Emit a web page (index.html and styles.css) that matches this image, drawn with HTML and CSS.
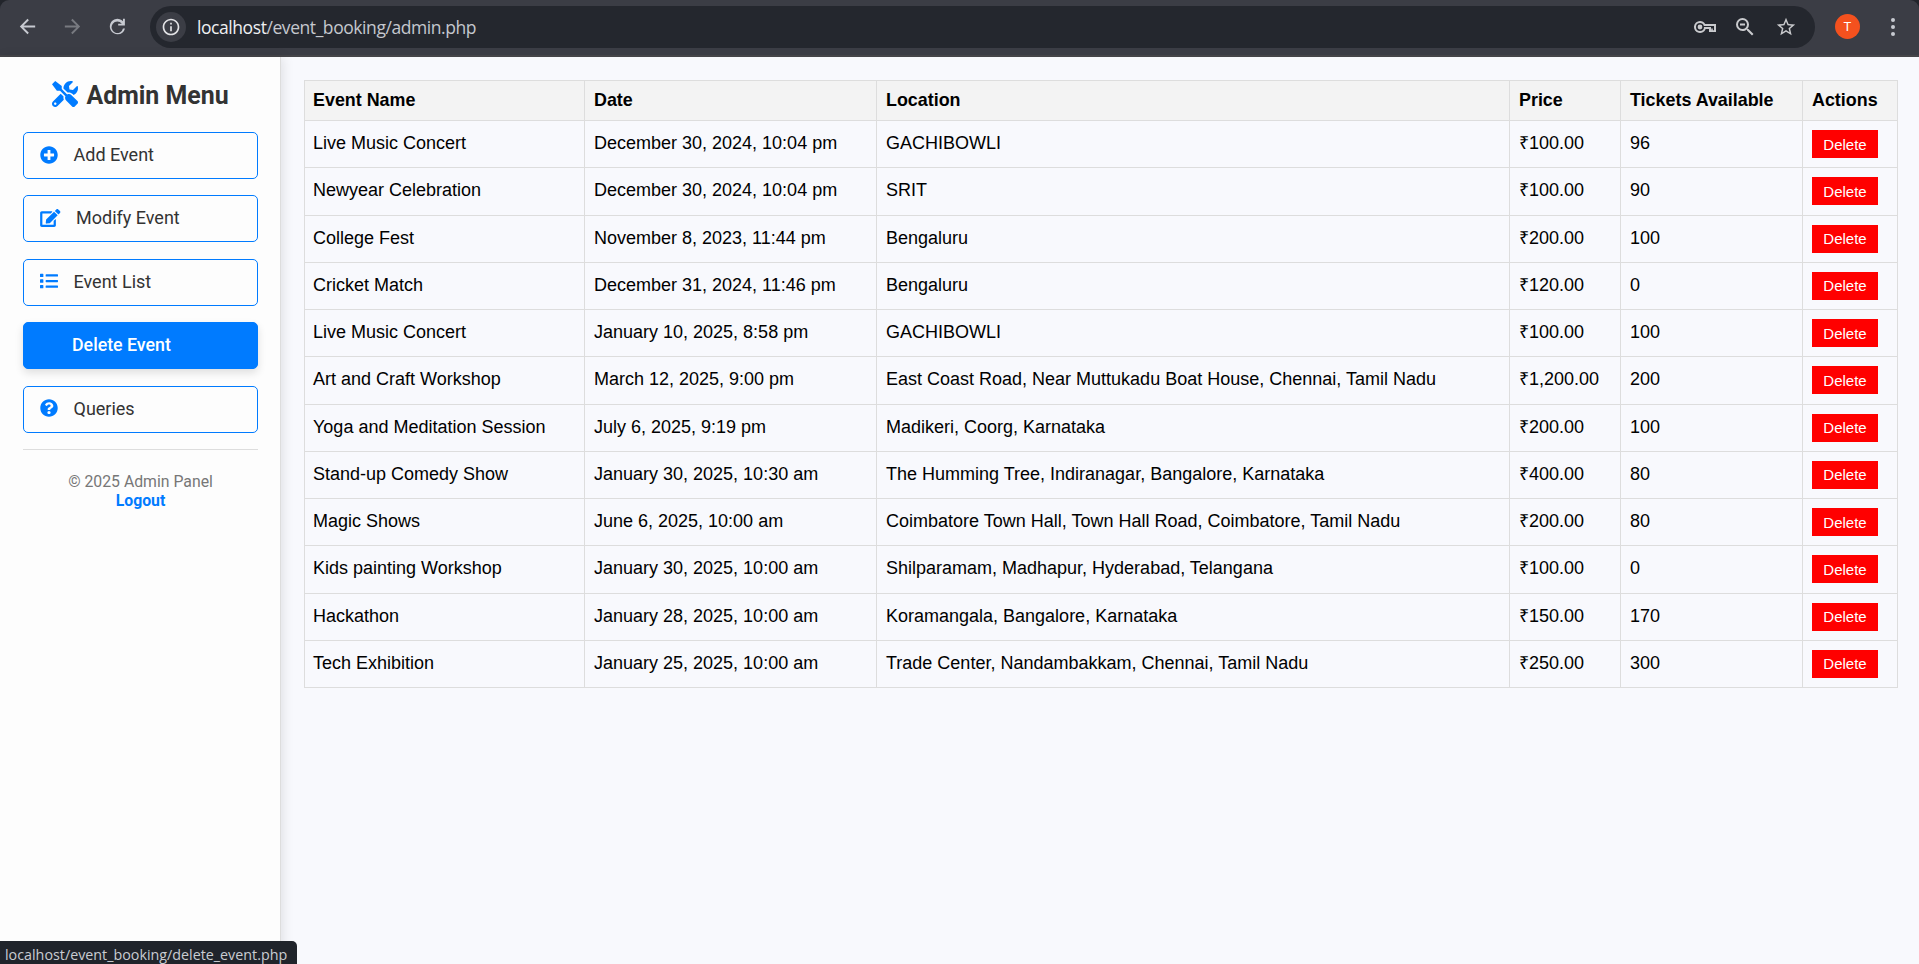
FILE: index.html
```html
<!DOCTYPE html>
<html lang="en">
<head>
<meta charset="utf-8">
<title>Admin Panel</title>
<link rel="stylesheet" href="styles.css">
</head>
<body>
<header class="toolbar">
  <svg class="nav-icon" viewBox="0 0 24 24"><path d="M20 11H7.83l5.59-5.59L12 4l-8 8 8 8 1.41-1.41L7.83 13H20z"/></svg>
  <svg class="nav-icon nav-icon-off" viewBox="0 0 24 24"><path d="M4 11h12.17l-5.59-5.59L12 4l8 8-8 8-1.41-1.41L16.17 13H4z"/></svg>
  <svg class="nav-icon" viewBox="0 0 24 24"><path d="M12 20a8 8 0 1 1 5.7-13.6V4h2v7h-7V9h3.8A6 6 0 1 0 17.7 14h2.1A8 8 0 0 1 12 20z"/></svg>
  <div class="omnibox">
    <span class="site-info"><svg viewBox="0 0 24 24"><path d="M11 17h2v-6h-2v6zm1-15C6.48 2 2 6.48 2 12s4.480 10 10 10 10-4.480 10-10S17.520 2 12 2zm0 18c-4.410 0-8-3.590-8-8s3.590-8 8-8 8 3.590 8 8-3.590 8-8 8zM11 9h2V7h-2v2z"/></svg></span>
    <span class="url"><span class="host">localhost</span>/event_booking/admin.php</span>
    <svg class="box-icon key" viewBox="0 0 24 14"><path fill-rule="evenodd" d="M7 1a6 6 0 1 0 5.650 8H16v3h7V4H12.200A6 6 0 0 0 7 1zm0 2a4 4 0 0 1 3.900 3H21v4.200h-1.200V8.500h-1.600v1.700H18V7H11A4 4 0 1 1 7 3zm0 1.600a2.400 2.400 0 1 0 0 4.800 2.400 2.400 0 0 0 0-4.800z"/></svg>
    <svg class="box-icon lens" viewBox="0 0 24 24"><path d="M15.500 14h-.79l-.28-.27A6.471 6.471 0 0 0 16 9.500 6.500 6.500 0 1 0 9.500 16c1.610 0 3.090-.59 4.230-1.570l.27.28v.79l5 4.990L20.490 19l-4.990-5zm-6 0C7.010 14 5 11.990 5 9.500S7.010 5 9.500 5 14 7.010 14 9.500 11.990 14 9.500 14zM7 8.500h5v2H7z"/></svg>
    <svg class="box-icon star" viewBox="0 0 24 24"><path d="M22 9.240l-7.190-.62L12 2 9.190 8.630 2 9.240l5.460 4.730L5.820 21 12 17.270 18.180 21l-1.630-7.030L22 9.240zM12 15.400l-3.760 2.270 1-4.280-3.320-2.880 4.380-.38L12 6.100l1.710 4.040 4.380.38-3.320 2.880 1 4.280L12 15.400z"/></svg>
  </div>
  <span class="avatar">T</span>
  <span class="dots"><i></i><i></i><i></i></span>
</header>
<div class="page">
  <aside class="sidebar">
    <h2 class="brand"><svg class="brand-icon" viewBox="0 0 512 512"><path d="M501.100 395.700L384 278.600c-23.100-23.100-57.600-27.600-85.400-13.900L192 158.100V96L64 0 0 64l96 128h62.100l106.600 106.600c-13.600 27.800-9.200 62.300 13.900 85.400l117.100 117.100c14.600 14.600 38.200 14.600 52.700 0l52.700-52.700c14.500-14.600 14.500-38.200 0-52.700zM331.700 225c28.300 0 54.900 11 74.900 31l19.400 19.400c15.800-6.900 30.800-16.500 43.800-29.500 37.100-37.100 49.700-89.300 37.900-136.700-2.200-9-13.500-12.100-20.100-5.500l-74.400 74.400-67.900-11.300L334 98.900l74.400-74.400c6.600-6.600 3.400-17.900-5.700-20.200-47.400-11.700-99.600.9-136.600 37.900-28.500 28.500-41.900 66.100-41.200 103.600l82.100 82.100c8.100-1.900 16.500-2.900 24.700-2.900zm-103.900 82l-56.700-56.700L18.700 402.800c-25 25-25 65.500 0 90.500s65.500 25 90.500 0l123.600-123.600c-7.600-19.900-9.900-41.600-5-62.700zM64 472c-13.200 0-24-10.800-24-24 0-13.300 10.700-24 24-24s24 10.700 24 24c0 13.200-10.700 24-24 24z"/></svg><span>Admin Menu</span></h2>
    <nav class="menu">
      <a class="item"><svg viewBox="0 0 512 512"><path d="M256 8C119 8 8 119 8 256s111 248 248 248 248-111 248-248S393 8 256 8zm144 276c0 6.600-5.400 12-12 12h-92v92c0 6.600-5.400 12-12 12h-56c-6.600 0-12-5.400-12-12v-92h-92c-6.600 0-12-5.400-12-12v-56c0-6.600 5.400-12 12-12h92v-92c0-6.600 5.400-12 12-12h56c6.600 0 12 5.400 12 12v92h92c6.600 0 12 5.400 12 12v56z"/></svg>Add Event</a>
      <a class="item"><svg class="wide" viewBox="0 0 576 512"><path d="M402.600 83.200l90.200 90.200c3.800 3.800 3.800 10 0 13.800L274.400 405.600l-92.800 10.300c-12.400 1.400-22.900-9.100-21.500-21.500l10.300-92.800L388.800 83.200c3.800-3.800 10-3.800 13.800 0zm162-22.900l-48.800-48.800c-15.200-15.200-39.900-15.200-55.200 0l-35.400 35.400c-3.800 3.800-3.800 10 0 13.800l90.200 90.200c3.800 3.800 10 3.800 13.800 0l35.400-35.400c15.200-15.300 15.200-40 0-55.200zM384 346.200V448H64V128h229.800c3.200 0 6.200-1.300 8.500-3.500l40-40c7.600-7.600 2.200-20.500-8.500-20.500H48C21.500 64 0 85.500 0 112v352c0 26.500 21.500 48 48 48h352c26.500 0 48-21.500 48-48V306.200c0-10.700-12.900-16-20.500-8.500l-40 40c-2.200 2.300-3.500 5.300-3.500 8.500z"/></svg>Modify Event</a>
      <a class="item"><svg viewBox="0 0 512 512"><path d="M80 368H16a16 16 0 0 0-16 16v64a16 16 0 0 0 16 16h64a16 16 0 0 0 16-16v-64a16 16 0 0 0-16-16zm0-320H16A16 16 0 0 0 0 64v64a16 16 0 0 0 16 16h64a16 16 0 0 0 16-16V64a16 16 0 0 0-16-16zm0 160H16a16 16 0 0 0-16 16v64a16 16 0 0 0 16 16h64a16 16 0 0 0 16-16v-64a16 16 0 0 0-16-16zm416 176H176a16 16 0 0 0-16 16v32a16 16 0 0 0 16 16h320a16 16 0 0 0 16-16v-32a16 16 0 0 0-16-16zm0-320H176a16 16 0 0 0-16 16v32a16 16 0 0 0 16 16h320a16 16 0 0 0 16-16V80a16 16 0 0 0-16-16zm0 160H176a16 16 0 0 0-16 16v32a16 16 0 0 0 16 16h320a16 16 0 0 0 16-16v-32a16 16 0 0 0-16-16z"/></svg>Event List</a>
      <a class="item active">Delete Event</a>
      <a class="item"><svg viewBox="0 0 512 512"><path d="M504 256c0 137-111 248-248 248S8 393 8 256C8 119.100 119 8 256 8s248 111.100 248 248zM262.700 90c-54.500 0-89.300 23-116.500 63.800-3.500 5.300-2.400 12.400 2.700 16.300l34.700 26.300c5.200 3.900 12.600 3 16.700-2.100 17.900-22.700 30.100-35.800 57.300-35.800 20.400 0 45.700 13.100 45.700 33 0 15-12.400 22.700-32.500 34C247.100 238.500 216 254.900 216 296v4c0 6.600 5.400 12 12 12h56c6.600 0 12-5.400 12-12v-1.300c0-28.500 83.200-29.600 83.200-106.700 0-58-60.200-102-116.500-102zM256 338c-25.400 0-46 20.600-46 46s20.600 46 46 46 46-20.600 46-46-20.600-46-46-46z"/></svg>Queries</a>
    </nav>
    <footer class="side-foot"><span>© 2025 Admin Panel</span><a class="logout">Logout</a></footer>
  </aside>
  <main class="content">
    <table class="events">
      <thead><tr><th>Event Name</th><th>Date</th><th>Location</th><th>Price</th><th>Tickets Available</th><th>Actions</th></tr></thead>
      <tbody>
        <tr><td>Live Music Concert</td><td>December 30, 2024, 10:04 pm</td><td>GACHIBOWLI</td><td>₹100.00</td><td>96</td><td><button>Delete</button></td></tr>
        <tr><td>Newyear Celebration</td><td>December 30, 2024, 10:04 pm</td><td>SRIT</td><td>₹100.00</td><td>90</td><td><button>Delete</button></td></tr>
        <tr><td>College Fest</td><td>November 8, 2023, 11:44 pm</td><td>Bengaluru</td><td>₹200.00</td><td>100</td><td><button>Delete</button></td></tr>
        <tr><td>Cricket Match</td><td>December 31, 2024, 11:46 pm</td><td>Bengaluru</td><td>₹120.00</td><td>0</td><td><button>Delete</button></td></tr>
        <tr><td>Live Music Concert</td><td>January 10, 2025, 8:58 pm</td><td>GACHIBOWLI</td><td>₹100.00</td><td>100</td><td><button>Delete</button></td></tr>
        <tr><td>Art and Craft Workshop</td><td>March 12, 2025, 9:00 pm</td><td>East Coast Road, Near Muttukadu Boat House, Chennai, Tamil Nadu</td><td>₹1,200.00</td><td>200</td><td><button>Delete</button></td></tr>
        <tr><td>Yoga and Meditation Session</td><td>July 6, 2025, 9:19 pm</td><td>Madikeri, Coorg, Karnataka</td><td>₹200.00</td><td>100</td><td><button>Delete</button></td></tr>
        <tr><td>Stand-up Comedy Show</td><td>January 30, 2025, 10:30 am</td><td>The Humming Tree, Indiranagar, Bangalore, Karnataka</td><td>₹400.00</td><td>80</td><td><button>Delete</button></td></tr>
        <tr><td>Magic Shows</td><td>June 6, 2025, 10:00 am</td><td>Coimbatore Town Hall, Town Hall Road, Coimbatore, Tamil Nadu</td><td>₹200.00</td><td>80</td><td><button>Delete</button></td></tr>
        <tr><td>Kids painting Workshop</td><td>January 30, 2025, 10:00 am</td><td>Shilparamam, Madhapur, Hyderabad, Telangana</td><td>₹100.00</td><td>0</td><td><button>Delete</button></td></tr>
        <tr><td>Hackathon</td><td>January 28, 2025, 10:00 am</td><td>Koramangala, Bangalore, Karnataka</td><td>₹150.00</td><td>170</td><td><button>Delete</button></td></tr>
        <tr><td>Tech Exhibition</td><td>January 25, 2025, 10:00 am</td><td>Trade Center, Nandambakkam, Chennai, Tamil Nadu</td><td>₹250.00</td><td>300</td><td><button>Delete</button></td></tr>
      </tbody>
    </table>
  </main>
</div>
<div class="status">localhost/event_booking/delete_event.php</div>
</body>
</html>
```
FILE: styles.css
```css
* { box-sizing: border-box; }
body { margin: 0; height: 964px; overflow: hidden; display: flex; flex-direction: column; background: #22252b; }
.toolbar { height: 57px; flex: none; display: flex; align-items: center; padding: 0 16px 2px 16px; background: #3b3d45; border-bottom: 2px solid #454549; border-radius: 9px 9px 0 0; }
.nav-icon { width: 23px; height: 23px; margin-right: 22px; fill: #c7cad1; }
.nav-icon-off { fill: #787a80; }
.omnibox { width: 1665px; height: 42px; margin: 1px 0 0 -1px; padding: 0 18px 0 6px; display: flex; align-items: center; background: #24272e; border-radius: 21px; }
.site-info { width: 30px; height: 30px; border-radius: 50%; background: #3b3d45; display: flex; align-items: center; justify-content: center; }
.site-info svg { width: 20px; height: 20px; fill: #e3e3e6; }
.url { flex: 1; margin-left: 11px; font: 17.500px "Open Sans", sans-serif; letter-spacing: -.43px; color: #c5c8ce; white-space: nowrap; }
.host { color: #eff0f2; }
.box-icon { width: 22px; height: 22px; margin-left: 18px; fill: #c9cacd; }
.key { width: 24px; height: 14px; }
.lens { width: 24px; height: 24px; margin-left: 16px; }
.avatar { width: 25px; height: 25px; margin-left: 20px; border-radius: 50%; background: #f4511e; color: #fff; font: 13px/25px Roboto, sans-serif; text-align: center; }
.dots { margin-left: 31px; display: flex; flex-direction: column; gap: 3px; }
.dots i { width: 4px; height: 4px; border-radius: 50%; background: #c7cad1; }
.page { flex: 1; display: flex; background: #f8f9fd; }
.sidebar { width: 281px; padding: 23px 22px 0 23px; background: #fdfdfd; border-right: 1px solid #ddd; box-shadow: 2px 0 11px rgba(0,0,0,.1); font-family: Roboto, sans-serif; color: #333; }
.brand { margin: 0; height: 52px; display: flex; justify-content: center; gap: 8px; font-size: 24.900px; line-height: 31px; font-weight: 700; }
.brand-icon { width: 26px; height: 26px; margin-top: 1px; fill: #007bff; }
.menu { display: flex; flex-direction: column; gap: 16.400px; }
.item { height: 47px; padding: 0 0 2px 16px; display: flex; align-items: center; gap: 15.500px; border: 1px solid #007bff; border-radius: 5px; font-size: 18px; }
.item svg { width: 18px; height: 18px; fill: #007bff; }
.item .wide { width: 20.500px; }
.active { padding-left: 48px; background: #007bff; color: #fff; font-size: 17.800px; font-weight: 500; box-shadow: 0 4px 9px rgba(0,0,0,.12); }
.side-foot { margin-top: 16px; padding-top: 22px; border-top: 1px solid #ddd; display: flex; flex-direction: column; align-items: center; font-size: 15.800px; line-height: 19px; color: #777; }
.logout { color: #007bff; font-weight: 700; }
.content { flex: 1; padding: 23px 0 0 23px; }
.events { display: block; width: 1594px; border: solid #ddd; border-width: 1px 0 0 1px; font-family: "Liberation Sans", Arial, sans-serif; font-size: 18px; color: #000; }
.events thead, .events tbody { display: block; }
.events tr { display: grid; grid-template-columns: 280px 292px 633px 111px 182px 95px; height: 47.250px; }
.events thead tr { height: 40px; background: #f3f3f3; font-size: 17.900px; }
.events th, .events td { padding: 0 9px; border: solid #ddd; border-width: 0 1px 1px 0; text-align: left; line-height: 38px; white-space: nowrap; }
.events th:first-child, .events td:first-child { padding-left: 8px; }
.events td { line-height: 45px; }
.events td:last-child { padding-top: 9px; line-height: 0; }
.events button { width: 66px; height: 28px; padding: 0; border: 0; background: #f00; color: #fff; font: 15px "Liberation Sans", Arial, sans-serif; }
.status { position: absolute; left: 0; bottom: 0; width: 297px; height: 23px; padding-left: 5px; background: #20242b; border-radius: 0 5px 0 0; color: #c9ccd2; font: 14.300px/27px "Open Sans", sans-serif; white-space: nowrap; }
```
